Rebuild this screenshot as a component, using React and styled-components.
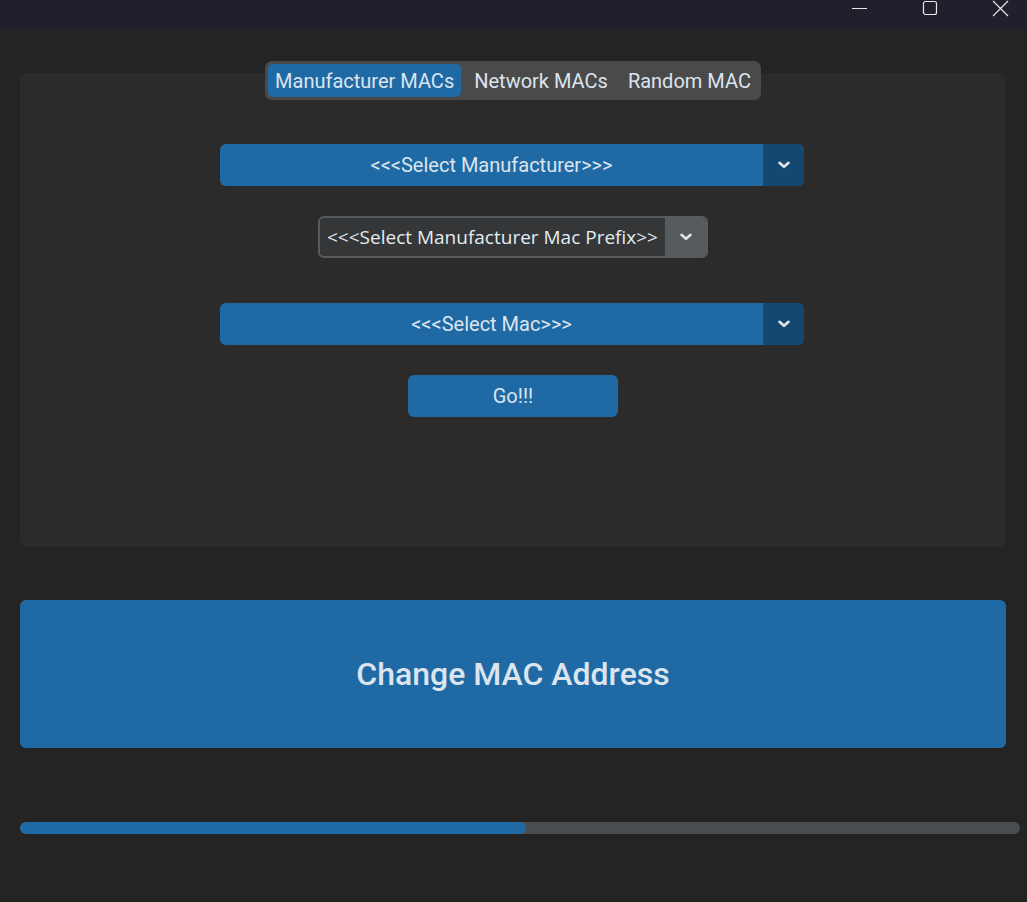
import React, { useState } from "react";
import styled, { createGlobalStyle } from "styled-components";

const Global = createGlobalStyle`
  html, body {
    margin: 0;
    padding: 0;
    background: #242424;
  }
  body {
    font-family: Roboto, "Noto Sans", sans-serif;
    color: #dce4ee;
  }
`;

const Window = styled.div`
  width: 1027px;
  height: 902px;
  display: flex;
  flex-direction: column;
  background: #242424;
  overflow: hidden;
`;

const TitleBar = styled.div`
  height: 30px;
  flex: none;
  display: flex;
  justify-content: flex-end;
  background: #1f202c;
`;

const WinBtn = styled.div`
  width: 70px;
  box-sizing: border-box;
  display: flex;
  align-items: flex-start;
  justify-content: center;
  padding-left: 16px;
  color: #e6e6e6;
`;

const Body = styled.div`
  flex: 1;
  display: flex;
  flex-direction: column;
  padding: 31px 21px 0 20px;
`;

const TabArea = styled.div`
  display: flex;
  flex-direction: column;
  align-items: center;
`;

const Segmented = styled.div`
  display: flex;
  gap: 6px;
  padding: 3px;
  background: #4a4a4a;
  border-radius: 7px;
  position: relative;
  z-index: 1;
`;

const Seg = styled.button`
  border: none;
  font-family: Roboto, sans-serif;
  font-size: 20px;
  color: #dce4ee;
  background: ${(p) => (p.active ? "#1f6aa5" : "transparent")};
  border-radius: 5px;
  height: 33px;
  padding: 0 7px;
  cursor: pointer;
`;

const Frame = styled.div`
  margin-top: -27px;
  width: 100%;
  height: 474px;
  background: #2b2b2b;
  border-radius: 6px;
  display: flex;
  flex-direction: column;
  align-items: center;
  padding-top: 71px;
  box-sizing: border-box;
`;

const Combo = styled.div`
  width: 584px;
  height: 42px;
  display: flex;
  border-radius: 6px;
  overflow: hidden;
  background: #1f6aa5;
  margin-right: 2px;
  margin-bottom: ${(p) => p.mb}px;
`;

const ComboText = styled.div`
  flex: 1;
  display: flex;
  align-items: center;
  justify-content: center;
  font-size: 20px;
  color: #dce4ee;
`;

const Arrow = styled.div`
  width: 41px;
  display: flex;
  align-items: center;
  justify-content: center;
  background: ${(p) => p.bg};
  color: #dce4ee;
`;

const Prefix = styled.div`
  width: 390px;
  height: 42px;
  box-sizing: border-box;
  display: flex;
  border: 2px solid #565b5e;
  border-radius: 6px;
  overflow: hidden;
  background: #343638;
  margin-bottom: 45px;
`;

const PrefixText = styled.div`
  flex: 1;
  display: flex;
  align-items: center;
  padding-left: 7px;
  font-family: "Open Sans", "Noto Sans", sans-serif;
  font-size: 19px;
  color: #e4ebf2;
  white-space: nowrap;
  overflow: hidden;
`;

const GoButton = styled.button`
  width: 210px;
  height: 42px;
  border: none;
  border-radius: 6px;
  background: #1f6aa5;
  color: #dce4ee;
  font-family: Roboto, sans-serif;
  font-size: 20px;
  cursor: pointer;
`;

const BigButton = styled.button`
  margin-top: 53px;
  width: 986px;
  height: 148px;
  border: none;
  border-radius: 6px;
  background: #1f6aa5;
  color: #dce4ee;
  font-family: Roboto, sans-serif;
  font-weight: 500;
  font-size: 32px;
  cursor: pointer;
`;

const Track = styled.div`
  margin-top: 74px;
  width: 1000px;
  height: 12px;
  border-radius: 6px;
  background: #4a4d50;
  overflow: hidden;
`;

const Fill = styled.div`
  height: 100%;
  background: #1f6aa5;
  border-radius: 6px;
`;

function Chevron() {
  return (
    <svg width="12" height="8" viewBox="0 0 12 8">
      <path
        d="M1.5 1.8 L6 5.8 L10.5 1.8"
        fill="none"
        stroke="#dce4ee"
        strokeWidth="2.6"
        strokeLinecap="round"
        strokeLinejoin="round"
      />
    </svg>
  );
}

export default function App() {
  const [tab, setTab] = useState(0);
  const tabs = ["Manufacturer MACs", "Network MACs", "Random MAC"];
  const progress = 0.506;

  return (
    <Window>
      <Global />
      <TitleBar>
        <WinBtn>
          <svg width="16" height="16" viewBox="0 0 16 16">
            <path d="M0 8.5 H15" stroke="#e6e6e6" strokeWidth="1" />
          </svg>
        </WinBtn>
        <WinBtn>
          <svg width="16" height="17" viewBox="0 0 16 17">
            <rect x="1.5" y="1.5" width="13" height="13" rx="2" fill="none" stroke="#e6e6e6" strokeWidth="1.2" />
          </svg>
        </WinBtn>
        <WinBtn>
          <svg width="17" height="17" viewBox="0 0 17 17">
            <path d="M1 1 L16 16 M16 1 L1 16" stroke="#e6e6e6" strokeWidth="1.2" />
          </svg>
        </WinBtn>
      </TitleBar>
      <Body>
        <TabArea>
          <Segmented>
            {tabs.map((t, i) => (
              <Seg key={t} active={tab === i} onClick={() => setTab(i)}>
                {t}
              </Seg>
            ))}
          </Segmented>
          <Frame>
            <Combo mb={30}>
              <ComboText>&lt;&lt;&lt;Select Manufacturer&gt;&gt;&gt;</ComboText>
              <Arrow bg="#144870">
                <Chevron />
              </Arrow>
            </Combo>
            <Prefix>
              <PrefixText>&lt;&lt;&lt;Select Manufacturer Mac Prefix&gt;&gt;</PrefixText>
              <Arrow bg="#565b5e">
                <Chevron />
              </Arrow>
            </Prefix>
            <Combo mb={30}>
              <ComboText>&lt;&lt;&lt;Select Mac&gt;&gt;&gt;</ComboText>
              <Arrow bg="#144870">
                <Chevron />
              </Arrow>
            </Combo>
            <GoButton>Go!!!</GoButton>
          </Frame>
        </TabArea>
        <BigButton>Change MAC Address</BigButton>
        <Track>
          <Fill style={{ width: `${progress * 100}%` }} />
        </Track>
      </Body>
    </Window>
  );
}
